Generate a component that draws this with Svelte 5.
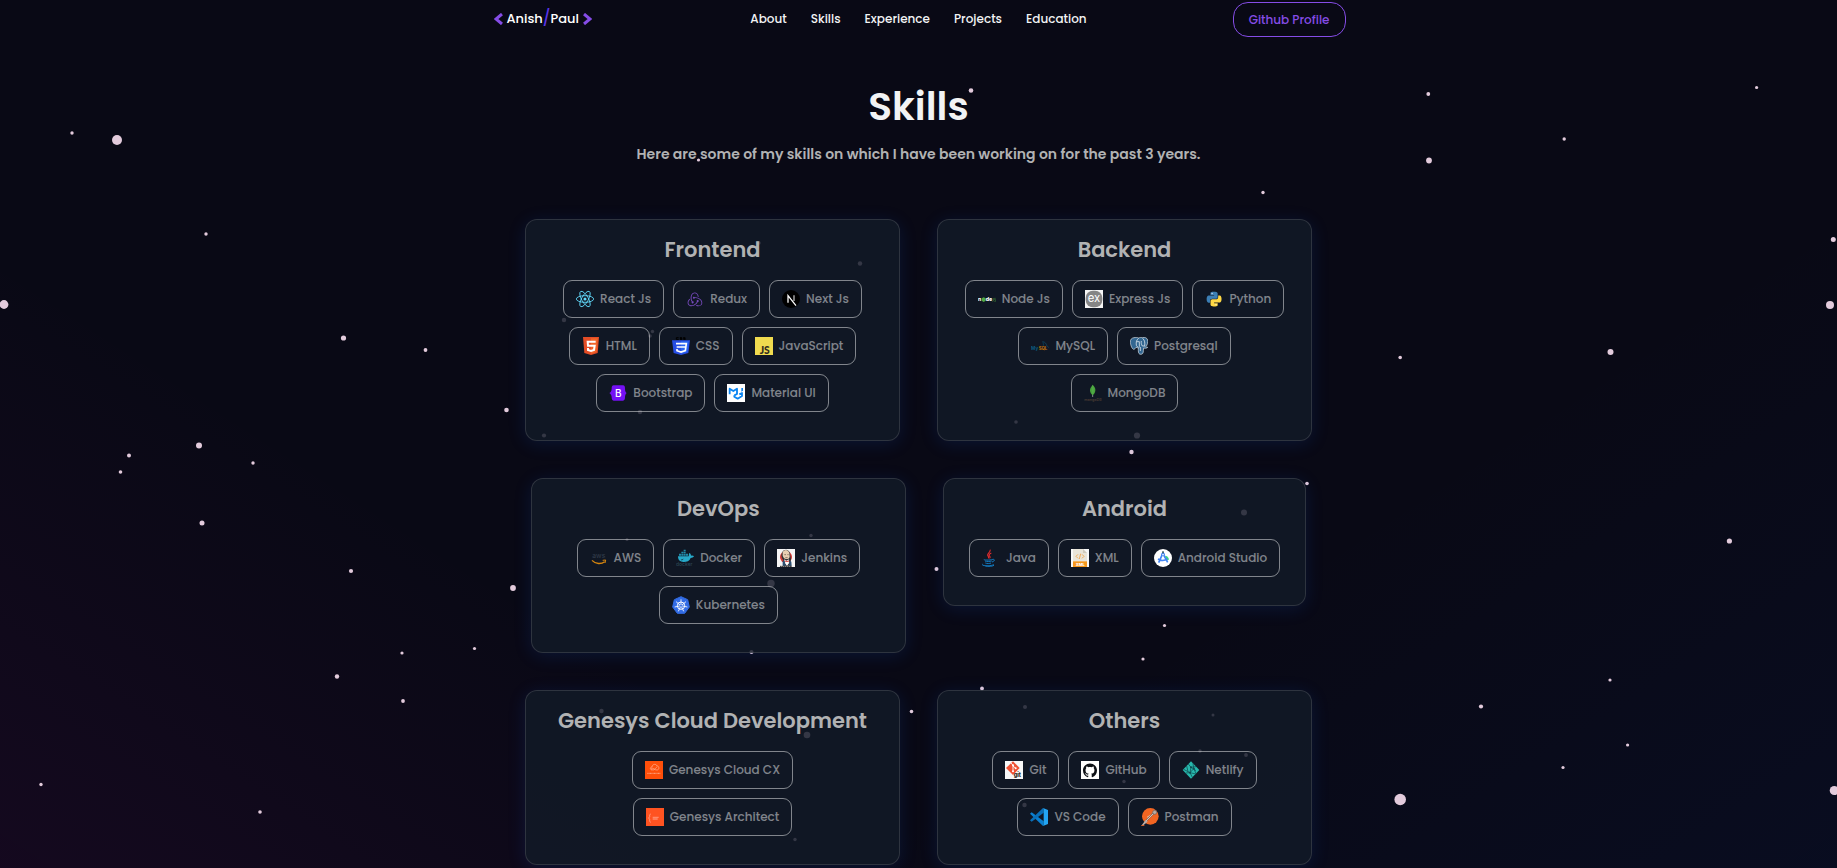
<script>
  const links = ['About', 'Skills', 'Experience', 'Projects', 'Education'];

  // Artwork for each skill, drawn on a 54-unit square.
  const icons = {
    react: `<g fill="none" stroke="#61dafb" stroke-width="2.6"><ellipse cx="27" cy="27" rx="26" ry="10"/><ellipse cx="27" cy="27" rx="26" ry="10" transform="rotate(60 27 27)"/><ellipse cx="27" cy="27" rx="26" ry="10" transform="rotate(120 27 27)"/></g><circle cx="27" cy="27" r="4.6" fill="#61dafb"/>`,
    redux: `<path transform="translate(5 6) scale(1.83)" fill="#764abc" d="M16.634 16.504c.87-.075 1.543-.84 1.5-1.754-.047-.914-.796-1.648-1.709-1.648h-.061a1.71 1.71 0 00-1.648 1.769c.03.479.226.869.494 1.153-1.048 2.038-2.621 3.535-5.005 4.795-1.603.838-3.296 1.154-4.944.929-1.378-.194-2.456-.81-3.116-1.799-.988-1.499-1.078-3.116-.255-4.734.601-1.166 1.499-2.023 2.099-2.443a9.96 9.96 0 01-.42-1.543C-.868 14.408-.416 18.752.932 20.805c1.004 1.498 3.057 2.456 5.304 2.456.6 0 1.23-.044 1.843-.194 3.897-.749 6.848-3.086 8.541-6.532zm5.348-3.746c-2.32-2.728-5.738-4.226-9.634-4.226h-.51c-.253-.554-.837-.899-1.498-.899h-.045c-.943 0-1.678.81-1.647 1.753.03.898.794 1.648 1.708 1.648h.074a1.69 1.69 0 001.499-1.049h.555c2.309 0 4.495.674 6.488 1.992 1.527 1.005 2.622 2.323 3.237 3.896.538 1.288.509 2.547-.045 3.597-.855 1.647-2.294 2.517-4.196 2.517-1.199 0-2.367-.375-2.967-.644-.36.298-.96.793-1.394 1.093 1.318.598 2.652.943 3.94.943 2.922 0 5.094-1.647 5.919-3.236.898-1.798.824-4.824-1.47-7.416zM6.49 17.042c.03.899.793 1.648 1.708 1.648h.06a1.688 1.688 0 001.648-1.768c0-.9-.779-1.647-1.693-1.647h-.06c-.06 0-.149 0-.226.029-1.243-2.098-1.768-4.347-1.572-6.772.12-1.828.72-3.417 1.797-4.735.899-1.124 2.593-1.68 3.746-1.708 3.236-.061 4.585 3.971 4.689 5.574l1.498.45c-.345-4.914-3.4-7.492-6.322-7.492-2.742 0-5.273 1.993-6.293 4.915-1.398 3.896-.479 7.641 1.229 10.638-.149.195-.239.539-.209.868z"/>`,
    next: `<circle cx="27" cy="27" r="27" fill="#000"/><path d="M18 38V17l24 30" fill="none" stroke="#fff" stroke-width="3.8"/><path d="M36 16v17" stroke="#fff" stroke-width="3.6" opacity=".8"/>`,
    html: `<path fill="#e44d26" d="M3 0h48l-4 48-20 6-20-6z"/><path fill="#f16529" d="M27 4h20l-4 41-16 5z"/><path fill="none" stroke="#fff" stroke-width="6" d="M41 14H17l1 12h20l-2 13-9 3-9-3v-6"/>`,
    css: `<path stroke="#000" stroke-width="3" fill="none" d="M20 2h-7v5h7M30 2h-6v2l6 1v2h-6M40 2h-6v2l6 1v2h-6"/><path fill="#264de4" d="M0 10h54l-5 38-22 6-22-6z"/><path fill="#2965f1" d="M27 13h23l-4 32-19 5z"/><path fill="none" stroke="#fff" stroke-width="5" d="M12 20h31l-3 21-13 4-12-4v-5M14 30h27"/>`,
    js: `<path fill="#f0db4f" d="M0 0h54v54H0z"/><text x="14" y="50" font-family="Lato, sans-serif" font-weight="900" font-size="31" fill="#2f2d1e">JS</text>`,
    bootstrap: `<path fill="#7411f4" d="M14 4h28c5 0 6 5 6 10 0 6 2 11 5 13-3 2-5 7-5 13 0 5-1 10-6 10H14c-5 0-6-5-6-10 0-6-3-11-7-13 4-2 7-7 7-13 0-5 1-10 6-10z"/><text x="18" y="38" font-family="Inter, sans-serif" font-weight="500" font-size="30" fill="#fff">B</text>`,
    mui: `<path fill="#fff" d="M0 0h54v54H0z"/><path fill="none" stroke="#0a85f2" stroke-width="5.5" stroke-linejoin="round" d="M8 31V14l11 7 11-7v16l-8 4"/><path fill="none" stroke="#0a85f2" stroke-width="5.5" stroke-linejoin="round" d="M22 34v4l10 6 13-8v-9l-8 4"/><path fill="#0a85f2" d="M43 12h5v8l-5 3z"/>`,
    node: `<text x="0" y="33" font-family="Inter, sans-serif" font-weight="800" font-size="15" fill="#fff">n</text><path fill="#4faa43" d="M17 22l6 3v7l-6 4-6-4v-7z"/><text x="23" y="33" font-family="Inter, sans-serif" font-weight="800" font-size="16" fill="#fff">de</text><path fill="none" stroke="#2c5a30" stroke-width="3" d="M46 24v9l-3 1M53 25h-4v4h4v5h-4"/>`,
    express: `<path fill="#f4f4f4" d="M0 0h54v54H0z"/><rect x="2" y="2" width="50" height="50" rx="22" fill="#858585"/><text x="27" y="36" text-anchor="middle" font-family="Inter, sans-serif" font-weight="400" font-size="34" fill="#fff">ex</text>`,
    python: `<g transform="translate(5 5) scale(1.85)"><path fill="#3c7fb5" d="M14.25.18l.9.2.73.26.59.3.45.32.34.34.25.34.16.33.1.3.04.26.02.2-.01.13V8.5l-.05.63-.13.55-.21.46-.26.38-.3.31-.33.25-.35.19-.35.14-.33.1-.3.07-.26.04-.21.02H8.77l-.69.05-.59.14-.5.22-.41.27-.33.32-.27.35-.2.36-.15.37-.1.35-.07.32-.04.27-.02.21v3.06H3.17l-.21-.03-.28-.07-.32-.12-.35-.18-.36-.26-.36-.36-.35-.46-.32-.59-.28-.73-.21-.88-.14-1.05-.05-1.23.06-1.22.16-1.04.24-.87.32-.71.36-.57.4-.44.42-.33.42-.24.4-.16.36-.1.32-.05.24-.01h.16l.06.01h8.16v-.83H6.18l-.01-2.75-.02-.37.05-.34.11-.31.17-.28.25-.26.31-.23.38-.2.44-.18.51-.15.58-.12.64-.1.71-.06.77-.04.84-.02 1.27.05z"/><path fill="#ffd845" d="M21.1 6.11l.28.06.32.12.35.18.36.27.36.35.35.47.32.59.28.73.21.88.14 1.04.05 1.23-.06 1.23-.16 1.04-.24.86-.32.71-.36.57-.4.45-.42.33-.42.24-.4.16-.36.09-.32.05-.24.02-.16-.01h-8.22v.82h5.84l.01 2.76.02.36-.05.34-.11.31-.17.29-.25.25-.31.24-.38.2-.44.17-.51.15-.58.13-.64.09-.71.07-.77.04-.84.01-1.27-.04-1.07-.14-.9-.2-.73-.25-.59-.3-.45-.33-.34-.34-.25-.34-.16-.33-.1-.3-.04-.25-.02-.2.01-.13v-5.34l.05-.64.13-.54.21-.46.26-.38.3-.32.33-.24.35-.2.35-.14.33-.1.3-.06.26-.04.21-.02.13-.01h5.84l.69-.05.59-.14.5-.21.41-.28.33-.32.27-.35.2-.36.15-.36.1-.35.07-.32.04-.28.02-.21V6.07h2.09l.14.01z"/><circle cx="8.8" cy="3" r="1.1" fill="#dbe8f3"/><circle cx="15.2" cy="21" r="1.1" fill="#fff6d0"/></g>`,
    mysql: `<text x="0" y="40" font-family="Inter, sans-serif" font-weight="700" font-size="14" fill="#0b5b80">My</text><text x="23" y="40" font-family="Inter, sans-serif" font-weight="700" font-size="13" fill="#c97a09">SQL</text><path fill="none" stroke="#0b4a68" stroke-width="2.2" d="M34 14c8 0 12 6 13 12 3 1 4 3 6 6M36 16c1 5 2 7 1 10"/>`,
    postgres: `<path fill="#336791" stroke="#dfe8ef" stroke-width="2" d="M12 2C5 3 0 8 1 16c1 9 5 20 10 21 3 0 5-3 7-6l5 1c2 1 2 5 2 9 0 7 2 11 8 11 6-1 7-5 7-11l1-8c5 1 9 1 12-2-3 0-4 0-5-2 4-6 6-13 5-20-2-7-9-9-15-7-4-1-8-1-12 1C22 1 17 1 12 2z"/><path fill="none" stroke="#dfe8ef" stroke-width="2.4" d="M26 4c-7 5-8 11-7 21l4 5M38 4c7 7 7 13 6 24M20 14h8v14c0 4-2 5-4 5M34 12c-1 6 0 10 3 15h7M31 30v12"/>`,
    mongo: `<path fill="#47a23c" d="M26 2c6 6 9 11 8 18-1 7-4 10-8 14-4-4-8-8-8-15 0-7 4-11 8-17z"/><path fill="#55ad49" d="M26 2c4 8 4 24 0 32-2-8-2-22 0-32z"/><path stroke="#b8c4c2" stroke-width="2" d="M26 33v6"/><text x="1" y="50" font-family="Inter, sans-serif" font-weight="600" font-size="11" fill="#493b32">mongoDB</text>`,
    aws: `<text x="7" y="28" font-family="Inter, sans-serif" font-weight="500" font-size="20" fill="#303b49">aws</text><path fill="none" stroke="#d5850f" stroke-width="4" d="M6 34c11 12 28 12 38 4"/><path fill="none" stroke="#d5850f" stroke-width="3" d="M38 34l9-1-2 9"/>`,
    docker: `<path fill="#27a9c9" d="M6 22h32c1-4 0-7 2-10 4 2 5 5 5 8 4-1 7 0 9 2-2 4-6 5-10 5-4 9-11 12-21 12C12 39 6 33 6 22z"/><path fill="#218aa8" d="M9 14h6v6H9zM16 14h6v6h-6zM23 14h6v6h-6zM30 14h6v6h-6zM16 8h6v5h-6zM23 8h6v5h-6zM23 2h6v5h-6z"/><path stroke="#111827" stroke-width="1.5" d="M15 33c3 0 5-1 7-3"/><text x="0" y="51" font-family="Inter, sans-serif" font-weight="500" font-size="15" fill="#2c4655">docker</text>`,
    jenkins: `<path fill="#f5f5f5" d="M0 0h54v54H0z"/><circle cx="27" cy="24" r="18" fill="#d33833"/><path fill="#303236" d="M16 9c5-9 18-9 22 1l4 20-2 11 3 9H18l3-12-6-11-2-8z"/><path fill="#e8cfb2" d="M17 9c5-9 17-8 20 3l1 11c-2 7-7 8-11 7-5-1-8-5-10-10z"/><path fill="none" stroke="#604c44" stroke-width="2" d="M22 17h5M31 17h4M25 26h7"/><path fill="#fff" d="M22 31l7 4 6-4 2 10-7 9-7-8z"/><path fill="#2b4f73" d="M17 35l6 2 3 13h-9zM38 34l5 4 1 12h-8z"/><path fill="#d33833" d="M25 34l5 3 5-3v6l-5-2-5 2z"/><path stroke="#222" stroke-width="3" stroke-dasharray="5 1" d="M9 52h36"/>`,
    kubernetes: `<path fill="#326ce5" stroke="#326ce5" stroke-width="3" stroke-linejoin="round" d="M27 2l20 9 5 22-14 19H16L2 33l5-22z"/><g fill="none" stroke="#fff"><circle cx="27" cy="29" r="11" stroke-width="3"/><path stroke-width="2.6" d="M27 29V10M27 29l15-12M27 29l19 4M27 29l8 17M27 29l-8 17M27 29L8 33M27 29L12 17"/></g><circle cx="27" cy="29" r="3" fill="#326ce5"/>`,
    java: `<path fill="none" stroke="#e42c2e" stroke-width="3.2" d="M24 2c5 7-12 11-6 19 3 3 3 4 1 7M28 12c-8 4-8 7-4 11 1 2 0 4-2 5"/><path fill="none" stroke="#1479bd" stroke-width="3" d="M6 31c-3 3 22 3 27 0M32 31c8-1 6 6-2 8M9 36c4 2 16 2 20 0M10 42c4 2 14 2 17 0M2 45c-9 6 28 8 33 1M10 51c9 2 22 1 26-2"/>`,
    xml: `<path fill="#f7f8f8" d="M0 0h54v54H0z"/><path fill="#e9e5d9" d="M6 0h30l12 12v26H6z"/><path fill="#cfcabb" d="M36 0l12 12H36z"/><path fill="#f7981d" d="M6 37h42v17H6z"/><path fill="none" stroke="#f2a344" stroke-width="2.6" d="M21 16l-6 6 6 6M33 16l6 6-6 6M29 14l-4 16"/><text x="14" y="51" font-family="Inter, sans-serif" font-weight="800" font-size="12" fill="#fff">XML</text>`,
    studio: `<circle cx="27" cy="27" r="27" fill="#fff"/><path fill="#3ddc84" d="M33 20c6 0 11 5 12 11-3 3-6 4-8 4z"/><path fill="none" stroke="#4285f4" stroke-width="5" d="M25 16L14 41M28 16l13 24M12 30c10 6 21 5 28-1"/><circle cx="27" cy="16" r="5.5" fill="#4285f4"/><path stroke="#073042" stroke-width="4" d="M27 7v6"/><circle cx="27" cy="17" r="2.4" fill="#fff"/>`,
    genesys: `<path fill="#ff4f0a" d="M0 0h54v54H0z"/><path fill="none" stroke="#ffb79d" stroke-width="2" d="M21 27c-7-1-6-9 0-9 1-9 12-11 15-3 8 0 7 12 0 12-6 1-13-8-16-5-3 4 5 7 9 3 3-3 4-7 7-6"/><path stroke="#ffb79d" stroke-width="2.5" stroke-dasharray="3 1" d="M7 37h40"/>`,
    architect: `<path fill="#ff5321" d="M0 0h54v54H0z"/><path fill="none" stroke="#ff9d83" stroke-width="3" d="M14 18c-4 1-3 5-3 8l-3 4 3 4c0 4-1 7 3 9"/><path stroke="#ff9d83" stroke-width="4" opacity=".75" d="M20 28h18M20 33h15"/>`,
    git: `<path fill="#f7f7f7" d="M0 0h54v54H0z"/><path fill="#f05133" d="M24 1l20 20-20 21L3 21z"/><path fill="none" stroke="#fff" stroke-width="2.6" d="M18 6l6 7v19M24 15l8 7"/><circle cx="24" cy="13" r="3" fill="#fff"/><circle cx="24" cy="31" r="3" fill="#fff"/><circle cx="32" cy="22" r="3" fill="#fff"/><text x="26" y="48" font-family="Inter, sans-serif" font-weight="800" font-size="17" fill="#2b2620">git</text>`,
    github: `<path fill="#fff" d="M0 0h54v54H0z"/><path transform="translate(6 7) scale(1.75)" fill="#0e1116" d="M12 .297c-6.63 0-12 5.373-12 12 0 5.303 3.438 9.8 8.205 11.385.6.113.82-.258.82-.577 0-.285-.01-1.04-.015-2.04-3.338.724-4.042-1.61-4.042-1.61C4.422 18.07 3.633 17.7 3.633 17.7c-1.087-.744.084-.729.084-.729 1.205.084 1.838 1.236 1.838 1.236 1.07 1.835 2.809 1.305 3.495.998.108-.776.417-1.305.76-1.605-2.665-.3-5.466-1.332-5.466-5.93 0-1.31.465-2.38 1.235-3.22-.135-.303-.54-1.523.105-3.176 0 0 1.005-.322 3.3 1.23.96-.267 1.98-.399 3-.405 1.02.006 2.04.138 3 .405 2.28-1.552 3.285-1.23 3.285-1.23.645 1.653.24 2.873.12 3.176.765.84 1.23 1.91 1.23 3.22 0 4.61-2.805 5.625-5.475 5.92.42.36.81 1.096.81 2.22 0 1.606-.015 2.896-.015 3.286 0 .315.21.69.825.57C20.565 22.092 24 17.592 24 12.297c0-6.627-5.373-12-12-12"/>`,
    netlify: `<path fill="#27b8ac" d="M27 1l25 26-25 26L2 27z"/><path fill="none" stroke="#0e4a50" stroke-width="2.2" d="M19 9l8 10 15-2M27 19l-3 16 18 4M27 19l15 10M24 35L5 25M24 35l7 14M33 7l2 16-11 12-13 1M35 23l7 14M14 15l4 17"/><g fill="#0e4a50"><circle cx="27" cy="19" r="3"/><circle cx="24" cy="35" r="3"/><circle cx="36" cy="23" r="2.6"/></g>`,
    vscode: `<path fill="#0a7fd0" d="M0 17l5-4 36 27v13l-2 1z"/><path fill="#0a6fb8" d="M0 37l5 4 36-27V1l-2-1z"/><path fill="#23a5f3" d="M39 0l15 6v42l-15 6c2-1 2-2 2-4V4c0-2 0-3-2-4z"/>`,
    postman: `<circle cx="28" cy="25" r="25" fill="#f26522"/><path fill="none" stroke="#f6c0a4" stroke-width="3" d="M18 28l11-7"/><path fill="none" stroke="#8d7063" stroke-width="6" stroke-linecap="round" d="M38 15L13 41"/><path fill="none" stroke="#e2d2c7" stroke-width="2.6" d="M36 18L14 40"/><circle cx="41" cy="13" r="6" fill="#b7aca5" stroke="#6b6360" stroke-width="2"/><path fill="#b9aca5" d="M14 36l6 5-12 10-7 2z"/><path stroke="#f26522" stroke-width="3" d="M1 53h9"/>`
  };

  const groups = [
    {
      title: 'Frontend',
      skills: [['React Js', 'react'], ['Redux', 'redux'], ['Next Js', 'next'], ['HTML', 'html'], ['CSS', 'css'], ['JavaScript', 'js'], ['Bootstrap', 'bootstrap'], ['Material UI', 'mui']]
    },
    {
      title: 'Backend',
      skills: [['Node Js', 'node'], ['Express Js', 'express'], ['Python', 'python'], ['MySQL', 'mysql'], ['Postgresql', 'postgres'], ['MongoDB', 'mongo']]
    },
    {
      title: 'DevOps',
      skills: [['AWS', 'aws'], ['Docker', 'docker'], ['Jenkins', 'jenkins'], ['Kubernetes', 'kubernetes']]
    },
    {
      title: 'Android',
      skills: [['Java', 'java'], ['XML', 'xml'], ['Android Studio', 'studio']]
    },
    {
      title: 'Genesys Cloud Development',
      skills: [['Genesys Cloud CX', 'genesys'], ['Genesys Architect', 'architect']]
    },
    {
      title: 'Others',
      skills: [['Git', 'git'], ['GitHub', 'github'], ['Netlify', 'netlify'], ['VS Code', 'vscode'], ['Postman', 'postman']]
    }
  ];

  // Star field: x, y, radius.
  const stars = [
    [72, 133, 1.7], [117, 140, 5], [206, 234, 1.7], [4, 304.5, 4.4], [343.5, 338, 2.6], [425.5, 350, 1.9],
    [506.5, 410, 2.3], [199, 445.5, 3], [129, 455.5, 2], [253, 463, 1.7], [120.5, 472, 1.8], [202, 523, 2.5],
    [351, 571, 2.1], [513, 588, 2.9], [402, 653, 1.6], [474.5, 648.5, 1.6], [337, 676.5, 2.2], [403, 701, 1.9],
    [41, 784.5, 1.7], [260, 812, 1.8], [1428.3, 94, 1.9], [1756.6, 87.5, 1.6], [1564.2, 139, 1.7], [1429, 160.5, 2.9],
    [1833.3, 239.5, 2.5], [1830, 305, 4], [1400.2, 357.5, 1.8], [1610.5, 352, 3], [1729.4, 541, 2.6], [1610, 680, 1.6],
    [1481, 706.5, 2.1], [1627.6, 745, 1.6], [1563, 767.5, 1.6], [1400.2, 799.5, 5.8], [1834.3, 790.5, 4.6],
    [971, 90.5, 2.3], [698.5, 160, 1.6], [1263, 192.5, 1.7], [860, 263.5, 2.2], [564, 320, 2.2], [652.5, 331.5, 1.7],
    [650, 336, 1.8], [640, 412, 2.2], [544, 435.5, 2.1], [759, 243, 1.7], [1016, 422, 1.8], [1137, 435.5, 3.1],
    [1131.5, 452, 2.2], [627, 539.5, 1.5], [811, 535.5, 1.7], [771, 583.5, 3.7], [751.5, 652, 2], [1307, 483.5, 1.8],
    [1244, 512.5, 3], [936.5, 569, 2], [1164.5, 625.5, 1.6], [1143, 659, 1.6], [601.5, 711, 2.2], [807, 735, 3.3],
    [911.5, 711.5, 1.8], [795, 839.5, 1.7], [982, 688.5, 1.9], [1025, 707, 2], [1213, 715, 1.5], [1200, 751, 1.7],
    [1246, 755, 1.9], [1124, 781.5, 1.7], [1024.5, 805, 2.2]
  ];
</script>

<div class="page">
  <header class="bar">
    <a class="logo" href="#home">
      <svg class="chevron" viewBox="0 0 9 12" aria-hidden="true"><path d="M8 1L2 6l6 5" /></svg>
      <span>Anish<span class="slash">/</span>Paul</span>
      <svg class="chevron" viewBox="0 0 9 12" aria-hidden="true"><path d="M1 1l6 5-6 5" /></svg>
    </a>
    <nav class="links">
      {#each links as link}
        <a href="#{link.toLowerCase()}">{link}</a>
      {/each}
    </nav>
    <a class="profile" href="#github">Github Profile</a>
  </header>

  <main class="skills" id="skills">
    <h1>Skills</h1>
    <p class="intro">Here are some of my skills on which I have been working on for the past 3 years.</p>
    <div class="groups">
      {#each groups as group}
        <section class="card">
          <h2>{group.title}</h2>
          <ul>
            {#each group.skills as [name, icon]}
              <li>
                <svg class="icon" viewBox="0 0 54 54" aria-hidden="true">{@html icons[icon]}</svg>
                <span>{name}</span>
              </li>
            {/each}
          </ul>
        </section>
      {/each}
    </div>
  </main>

  <svg class="stars" viewBox="0 0 1837 868" preserveAspectRatio="xMidYMin slice" aria-hidden="true">
    {#each stars as [x, y, r]}
      <circle cx={x} cy={y} {r} />
    {/each}
  </svg>
</div>

<style>
  :global(body) {
    margin: 0;
    background: #090917;
  }

  .page {
    position: relative;
    box-sizing: border-box;
    min-height: 100vh;
    overflow: hidden;
    font-family: Poppins, Inter, sans-serif;
    background:
      linear-gradient(33deg, rgba(204, 0, 187, 0.06) 0%, rgba(201, 32, 184, 0) 30%),
      linear-gradient(147deg, rgba(0, 70, 209, 0) 68%, rgba(0, 70, 209, 0.06) 100%),
      #090915;
  }

  .stars {
    position: absolute;
    inset: 0;
    width: 100%;
    height: 100%;
    z-index: 1;
    fill: #e3cbdc;
    pointer-events: none;
  }

  .bar {
    display: grid;
    grid-template-columns: 1fr auto 1fr;
    align-items: center;
    box-sizing: border-box;
    max-width: 854px;
    height: 38px;
    margin: 0 auto;
    font-size: 12px;
    font-weight: 500;
  }

  .bar a {
    color: #f2f3f4;
    text-decoration: none;
  }

  .bar .logo {
    display: flex;
    align-items: center;
    gap: 4px;
    padding: 0 2px;
    font-size: 13px;
    line-height: 18px;
    color: #fff;
  }

  .chevron {
    width: 9px;
    height: 12px;
    fill: none;
    stroke: #854ce6;
    stroke-width: 3;
  }

  .slash {
    color: #5b35e8;
    font-size: 15px;
    line-height: 1px;
  }

  .links {
    display: flex;
    gap: 24px;
  }

  .bar .profile {
    justify-self: end;
    padding: 8px 15px;
    border: 1px solid #854ce6;
    border-radius: 15px;
    line-height: 17px;
    color: #854ce6;
  }

  .skills {
    padding: 45px 16px 0;
    text-align: center;
  }

  h1 {
    margin: 0;
    font-size: 39px;
    line-height: 48px;
    font-weight: 600;
    color: #f2f3f4;
  }

  .intro {
    margin: 13px 0 55px;
    font-size: 14px;
    line-height: 20px;
    font-weight: 600;
    color: #b1b2b3;
  }

  .groups {
    position: relative;
    z-index: 2;
    display: flex;
    flex-wrap: wrap;
    justify-content: center;
    align-items: flex-start;
    gap: 37px;
    max-width: 825px;
    margin: 0 auto;
  }

  .card {
    box-sizing: border-box;
    max-width: 375px;
    padding: 15px 25px 28px;
    border: 1px solid rgba(255, 255, 255, 0.125);
    border-radius: 12px;
    background: rgba(18, 26, 39, 0.84);
    box-shadow: 0 3px 18px rgba(23, 92, 230, 0.15);
  }

  h2 {
    margin: 0 0 15px;
    font-size: 21px;
    line-height: 30px;
    font-weight: 600;
    color: #b1b2b3;
  }

  ul {
    display: flex;
    flex-wrap: wrap;
    justify-content: center;
    gap: 9px;
    margin: 0;
    padding: 0;
    list-style: none;
  }

  li {
    display: flex;
    align-items: center;
    gap: 6px;
    box-sizing: border-box;
    height: 38px;
    padding: 0 12px;
    border: 1px solid rgba(242, 243, 244, 0.5);
    border-radius: 9px;
    font-size: 12px;
    font-weight: 500;
    color: rgba(242, 243, 244, 0.5);
  }

  .icon {
    width: 18px;
    height: 18px;
    flex: none;
  }
</style>
